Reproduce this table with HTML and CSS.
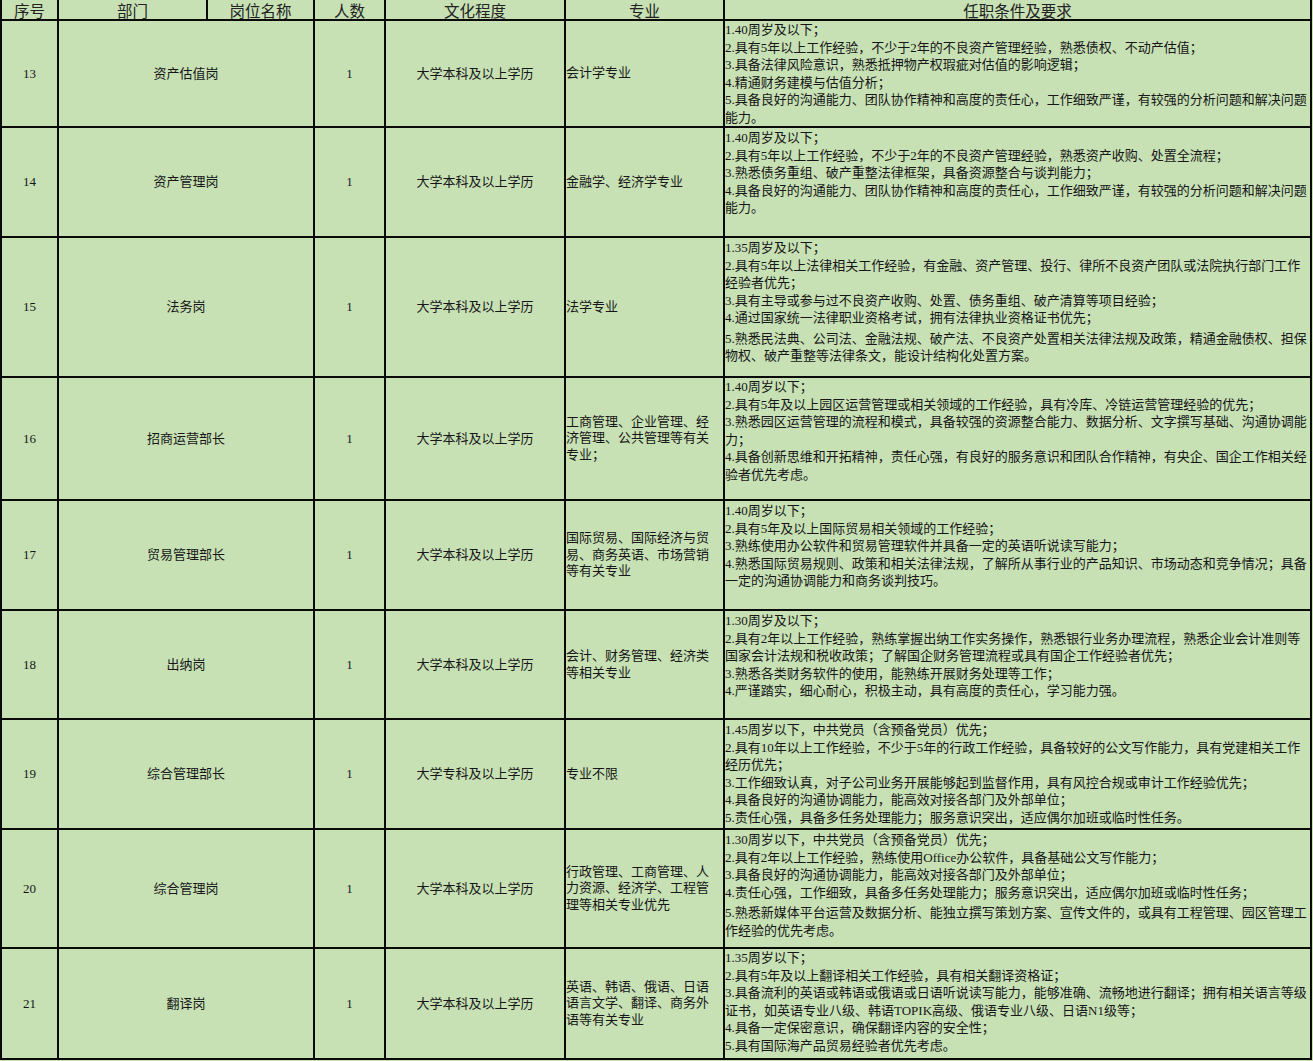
FILE: index.html
```html
<!DOCTYPE html>
<html lang="zh-CN">
<head>
<meta charset="utf-8">
<title>岗位表</title>
<link rel="stylesheet" href="styles.css">
</head>
<body>
<table class="sheet">
  <colgroup>
    <col class="c-no">
    <col class="c-dept">
    <col class="c-pos">
    <col class="c-num">
    <col class="c-edu">
    <col class="c-major">
    <col class="c-req">
  </colgroup>
  <thead>
    <tr class="h-head">
      <th>序号</th>
      <th>部门</th>
      <th>岗位名称</th>
      <th>人数</th>
      <th>文化程度</th>
      <th>专业</th>
      <th>任职条件及要求</th>
    </tr>
  </thead>
  <tbody>
    <tr class="h107">
      <td class="mid">13</td>
      <td class="mid" colspan="2">资产估值岗</td>
      <td class="mid">1</td>
      <td class="mid">大学本科及以上学历</td>
      <td class="major">会计学专业</td>
      <td class="req">
        <div>1.40周岁及以下；</div>
        <div>2.具有5年以上工作经验，不少于2年的不良资产管理经验，熟悉债权、不动产估值；</div>
        <div>3.具备法律风险意识，熟悉抵押物产权瑕疵对估值的影响逻辑；</div>
        <div>4.精通财务建模与估值分析；</div>
        <div>5.具备良好的沟通能力、团队协作精神和高度的责任心，工作细致严谨，有较强的分析问题和解决问题<br>能力。</div>
      </td>
    </tr>
    <tr class="h110">
      <td class="mid">14</td>
      <td class="mid" colspan="2">资产管理岗</td>
      <td class="mid">1</td>
      <td class="mid">大学本科及以上学历</td>
      <td class="major">金融学、经济学专业</td>
      <td class="req pad">
        <div>1.40周岁及以下；</div>
        <div>2.具有5年以上工作经验，不少于2年的不良资产管理经验，熟悉资产收购、处置全流程；</div>
        <div>3.熟悉债务重组、破产重整法律框架，具备资源整合与谈判能力；</div>
        <div>4.具备良好的沟通能力、团队协作精神和高度的责任心，工作细致严谨，有较强的分析问题和解决问题<br>能力。</div>
      </td>
    </tr>
    <tr class="h140">
      <td class="mid">15</td>
      <td class="mid" colspan="2">法务岗</td>
      <td class="mid">1</td>
      <td class="mid">大学本科及以上学历</td>
      <td class="major">法学专业</td>
      <td class="req pad">
        <div>1.35周岁及以下；</div>
        <div>2.具有5年以上法律相关工作经验，有金融、资产管理、投行、律所不良资产团队或法院执行部门工作<br>经验者优先；</div>
        <div>3.具有主导或参与过不良资产收购、处置、债务重组、破产清算等项目经验；</div>
        <div>4.通过国家统一法律职业资格考试，拥有法律执业资格证书优先；</div>
        <div class="gap">5.熟悉民法典、公司法、金融法规、破产法、不良资产处置相关法律法规及政策，精通金融债权、担保<br>物权、破产重整等法律条文，能设计结构化处置方案。</div>
      </td>
    </tr>
    <tr class="h123">
      <td class="mid">16</td>
      <td class="mid" colspan="2">招商运营部长</td>
      <td class="mid">1</td>
      <td class="mid">大学本科及以上学历</td>
      <td class="major">工商管理、企业管理、经<br>济管理、公共管理等有关<br>专业；</td>
      <td class="req">
        <div>1.40周岁以下；</div>
        <div>2.具有5年及以上园区运营管理或相关领域的工作经验，具有冷库、冷链运营管理经验的优先；</div>
        <div>3.熟悉园区运营管理的流程和模式，具备较强的资源整合能力、数据分析、文字撰写基础、沟通协调能<br>力；</div>
        <div>4.具备创新思维和开拓精神，责任心强，有良好的服务意识和团队合作精神，有央企、国企工作相关经<br>验者优先考虑。</div>
      </td>
    </tr>
    <tr class="h110">
      <td class="mid">17</td>
      <td class="mid" colspan="2">贸易管理部长</td>
      <td class="mid">1</td>
      <td class="mid">大学本科及以上学历</td>
      <td class="major">国际贸易、国际经济与贸<br>易、商务英语、市场营销<br>等有关专业</td>
      <td class="req pad">
        <div>1.40周岁以下；</div>
        <div>2.具有5年及以上国际贸易相关领域的工作经验；</div>
        <div>3.熟练使用办公软件和贸易管理软件并具备一定的英语听说读写能力；</div>
        <div>4.熟悉国际贸易规则、政策和相关法律法规，了解所从事行业的产品知识、市场动态和竞争情况；具备<br>一定的沟通协调能力和商务谈判技巧。</div>
      </td>
    </tr>
    <tr class="h109">
      <td class="mid">18</td>
      <td class="mid" colspan="2">出纳岗</td>
      <td class="mid">1</td>
      <td class="mid">大学本科及以上学历</td>
      <td class="major">会计、财务管理、经济类<br>等相关专业</td>
      <td class="req pad">
        <div>1.30周岁及以下；</div>
        <div>2.具有2年以上工作经验，熟练掌握出纳工作实务操作，熟悉银行业务办理流程，熟悉企业会计准则等<br>国家会计法规和税收政策；了解国企财务管理流程或具有国企工作经验者优先；</div>
        <div>3.熟悉各类财务软件的使用，能熟练开展财务处理等工作；</div>
        <div>4.严谨踏实，细心耐心，积极主动，具有高度的责任心，学习能力强。</div>
      </td>
    </tr>
    <tr class="h110">
      <td class="mid">19</td>
      <td class="mid" colspan="2">综合管理部长</td>
      <td class="mid">1</td>
      <td class="mid">大学专科及以上学历</td>
      <td class="major">专业不限</td>
      <td class="req pad">
        <div>1.45周岁以下，中共党员（含预备党员）优先；</div>
        <div>2.具有10年以上工作经验，不少于5年的行政工作经验，具备较好的公文写作能力，具有党建相关工作<br>经历优先；</div>
        <div>3.工作细致认真，对子公司业务开展能够起到监督作用，具有风控合规或审计工作经验优先；</div>
        <div>4.具备良好的沟通协调能力，能高效对接各部门及外部单位；</div>
        <div>5.责任心强，具备多任务处理能力；服务意识突出，适应偶尔加班或临时性任务。</div>
      </td>
    </tr>
    <tr class="h119">
      <td class="mid">20</td>
      <td class="mid" colspan="2">综合管理岗</td>
      <td class="mid">1</td>
      <td class="mid">大学本科及以上学历</td>
      <td class="major">行政管理、工商管理、人<br>力资源、经济学、工程管<br>理等相关专业优先</td>
      <td class="req pad">
        <div>1.30周岁以下，中共党员（含预备党员）优先；</div>
        <div>2.具有2年以上工作经验，熟练使用Office办公软件，具备基础公文写作能力；</div>
        <div>3.具备良好的沟通协调能力，能高效对接各部门及外部单位；</div>
        <div>4.责任心强，工作细致，具备多任务处理能力；服务意识突出，适应偶尔加班或临时性任务；</div>
        <div class="gap">5.熟悉新媒体平台运营及数据分析、能独立撰写策划方案、宣传文件的，或具有工程管理、园区管理工<br>作经验的优先考虑。</div>
      </td>
    </tr>
    <tr class="h111">
      <td class="mid">21</td>
      <td class="mid" colspan="2">翻译岗</td>
      <td class="mid">1</td>
      <td class="mid">大学本科及以上学历</td>
      <td class="major">英语、韩语、俄语、日语<br>语言文学、翻译、商务外<br>语等有关专业</td>
      <td class="req">
        <div>1.35周岁以下；</div>
        <div>2.具有5年及以上翻译相关工作经验，具有相关翻译资格证；</div>
        <div>3.具备流利的英语或韩语或俄语或日语听说读写能力，能够准确、流畅地进行翻译；拥有相关语言等级<br>证书，如英语专业八级、韩语TOPIK高级、俄语专业八级、日语N1级等；</div>
        <div>4.具备一定保密意识，确保翻译内容的安全性；</div>
        <div>5.具有国际海产品贸易经验者优先考虑。</div>
      </td>
    </tr>
  </tbody>
</table>
</body>
</html>
```

FILE: styles.css
```css
html, body {
  margin: 0;
  padding: 0;
  background: #c7e1b5;
}

.sheet {
  border-collapse: collapse;
  table-layout: fixed;
  width: 1312px;
  font-family: "Liberation Serif", "Noto Sans CJK SC", serif;
  font-size: 13px;
  color: #161616;
  background: #c7e1b5;
}

.c-no { width: 57px; }
.c-dept { width: 149px; }
.c-pos { width: 107px; }
.c-num { width: 71px; }
.c-edu { width: 180px; }
.c-major { width: 159px; }
.c-req { width: 587px; }

.sheet th,
.sheet td {
  border: 2px solid #0a0a0a;
  padding: 0;
  overflow: hidden;
}

.sheet th {
  border-top: none;
  font-family: "Noto Sans CJK SC", sans-serif;
  font-size: 15.5px;
  font-weight: 400;
  line-height: 17px;
  color: #222;
  text-align: center;
  vertical-align: middle;
  padding-top: 1px;
}

.h-head { height: 20px; }
.h107 { height: 107px; }
.h109 { height: 109px; }
.h110 { height: 110px; }
.h111 { height: 111px; }
.h119 { height: 119px; }
.h123 { height: 123px; }
.h140 { height: 140px; }

.mid {
  text-align: center;
  vertical-align: middle;
  line-height: 16px;
}

.major {
  text-align: left;
  vertical-align: middle;
  line-height: 16.5px;
  padding-left: 2px;
}

.req {
  text-align: left;
  vertical-align: top;
  line-height: 17.5px;
  white-space: nowrap;
  padding: 0 2px 0 3px;
}

.req.pad {
  padding-top: 1px;
}

.req .gap {
  margin-top: 3px;
}
```
